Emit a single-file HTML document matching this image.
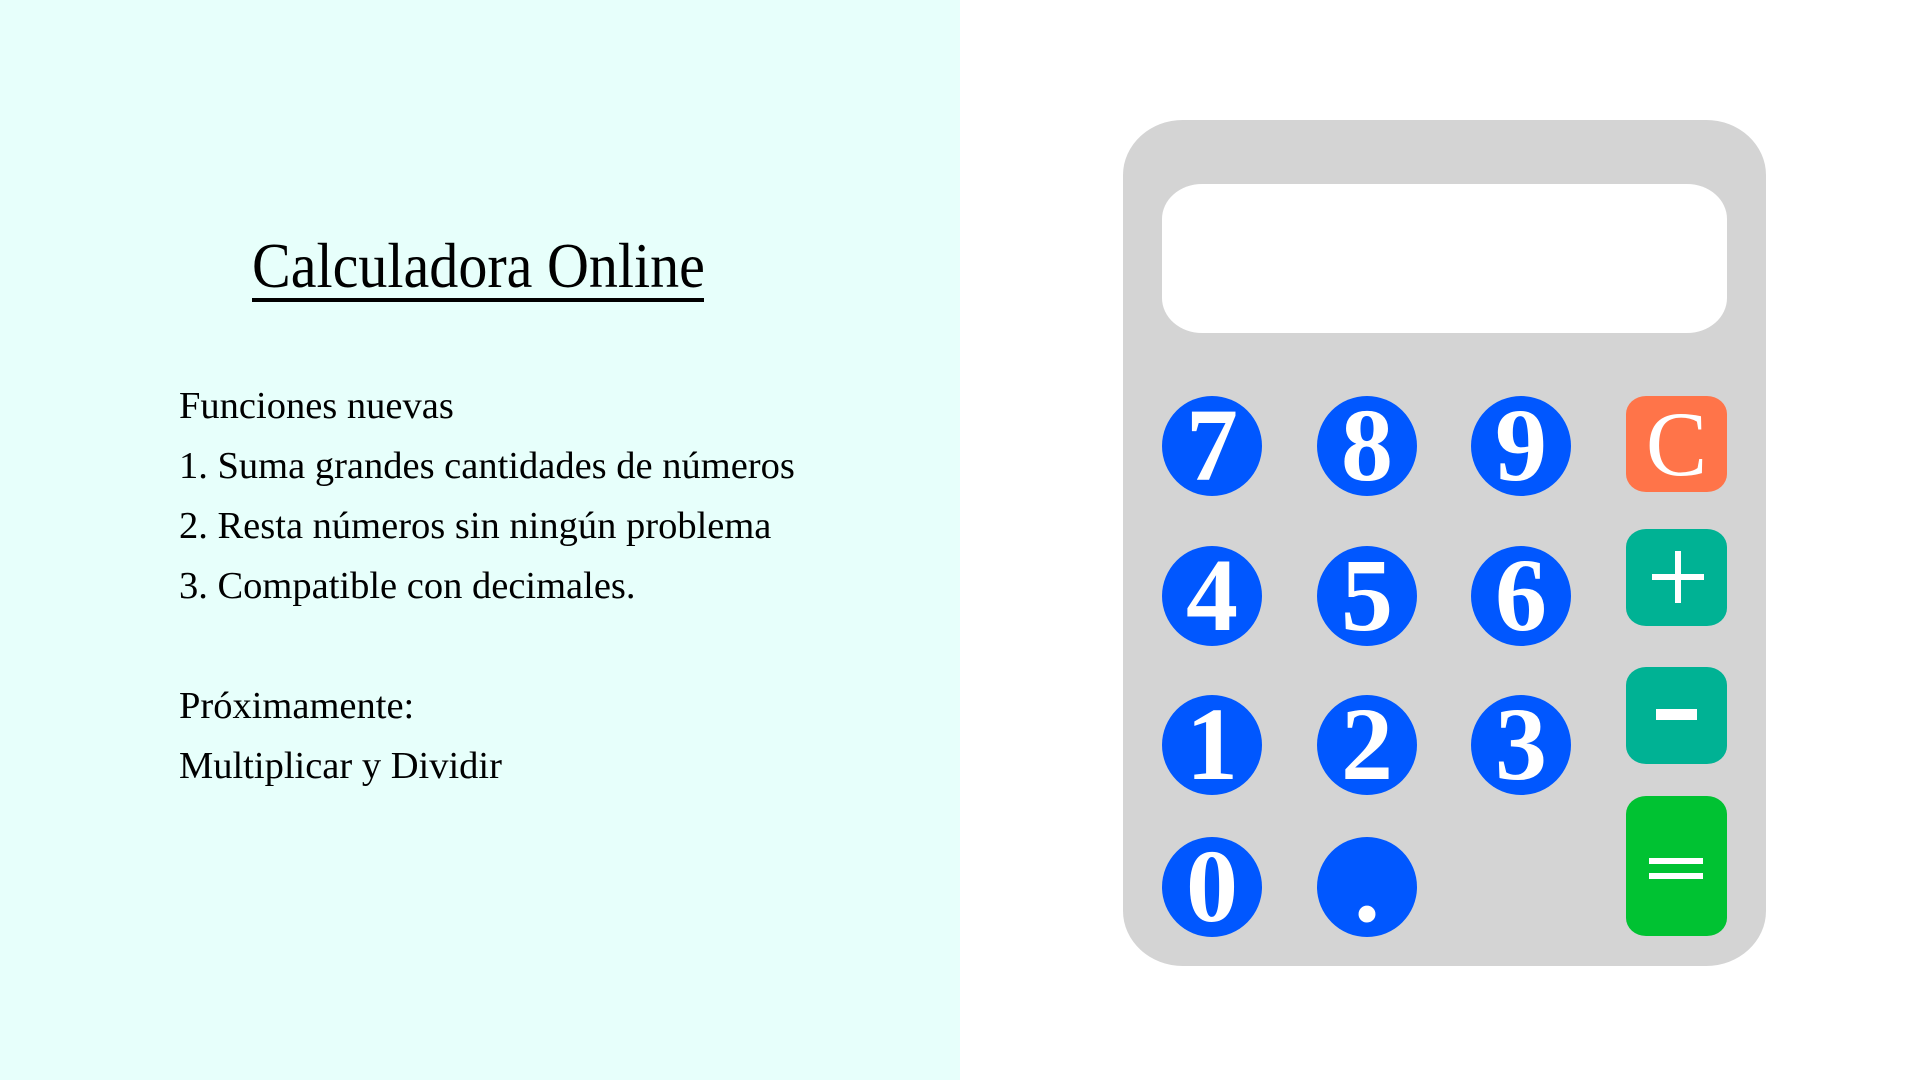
<!DOCTYPE html>
<html><head><meta charset="utf-8"><style>
html,body{margin:0;padding:0;width:1920px;height:1080px;overflow:hidden;background:#fff;font-family:"Liberation Serif",serif}
#left{position:absolute;left:0;top:0;width:960px;height:1080px;background:#e7fffb}
.t{position:absolute;white-space:nowrap;color:#000}
#title{left:252px;top:234px;font-size:64px;line-height:1;transform:scaleX(0.907);transform-origin:left top}
#ul{position:absolute;left:252px;top:298px;width:452px;height:4px;background:#000}
.b{left:179px;font-size:38.5px;line-height:1}
#calc{position:absolute;left:1123px;top:120px;width:643px;height:846px;background:#d4d4d4;border-radius:60px/55px}
#disp{position:absolute;left:1162px;top:184px;width:565px;height:149px;background:#fff;border-radius:40px/35px}
.c{position:absolute;width:100px;height:100px;border-radius:50%;background:#0057ff;color:#fff;font-weight:bold;font-size:104px;line-height:100px;text-align:center}
.s{position:absolute;left:1626px;width:101px;border-radius:20px/18px;color:#fff;text-align:center}
</style></head><body>
<div id="left"></div>
<div class="t" id="title">Calculadora Online</div>
<div id="ul"></div>
<div class="t b" style="top:387px">Funciones nuevas</div>
<div class="t b" style="top:447px">1. Suma grandes cantidades de números</div>
<div class="t b" style="top:507px">2. Resta números sin ningún problema</div>
<div class="t b" style="top:567px">3. Compatible con decimales.</div>
<div class="t b" style="top:687px">Próximamente:</div>
<div class="t b" style="top:747px">Multiplicar y Dividir</div>
<div id="calc"></div>
<div id="disp"></div>
<div class="c" style="left:1162px;top:396px">7</div>
<div class="c" style="left:1317px;top:396px">8</div>
<div class="c" style="left:1471px;top:396px">9</div>
<div class="c" style="left:1162px;top:546px">4</div>
<div class="c" style="left:1317px;top:546px">5</div>
<div class="c" style="left:1471px;top:546px">6</div>
<div class="c" style="left:1162px;top:695px">1</div>
<div class="c" style="left:1317px;top:695px">2</div>
<div class="c" style="left:1471px;top:695px">3</div>
<div class="c" style="left:1162px;top:837px">0</div>
<div class="c" style="left:1317px;top:837px">.</div>
<div class="s" style="top:396px;height:96px;background:#ff7449;font-size:92px;line-height:96px">C</div>
<div class="s" style="top:529px;height:97px;background:#00b294">
<div style="position:absolute;left:26px;top:45px;width:52px;height:6px;background:#fff"></div>
<div style="position:absolute;left:49px;top:22px;width:6px;height:52px;background:#fff"></div></div>
<div class="s" style="top:667px;height:97px;background:#00b294">
<div style="position:absolute;left:30px;top:42px;width:41px;height:11px;background:#fff"></div></div>
<div class="s" style="top:796px;height:140px;background:#00c232">
<div style="position:absolute;left:23px;top:62px;width:54px;height:6px;background:#fff"></div>
<div style="position:absolute;left:23px;top:77px;width:54px;height:6px;background:#fff"></div></div>
</body></html>
